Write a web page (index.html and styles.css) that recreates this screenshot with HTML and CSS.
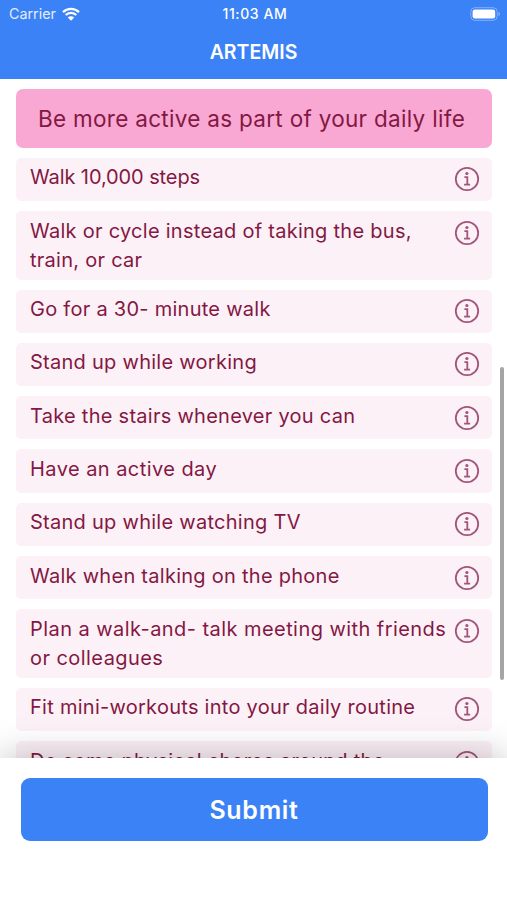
FILE: index.html
```html
<!DOCTYPE html>
<html lang="en">
<head>
<meta charset="UTF-8">
<meta name="viewport" content="width=device-width, initial-scale=1.0">
<title>Artemis</title>
<link rel="stylesheet" href="styles.css">
</head>
<body>
<svg class="hidden">
  <symbol id="info" viewBox="0 0 26 26">
    <circle cx="13" cy="13" r="11.2" fill="none" stroke="currentColor" stroke-width="1.8"/>
    <circle cx="12.9" cy="7.5" r="1.6" fill="currentColor"/>
    <path d="M10.4 11.2h2.9v7.4M10.1 18.6h6" fill="none" stroke="currentColor" stroke-width="1.8"/>
  </symbol>
</svg>
<div class="app">
  <header>
    <div class="status">
      <div class="carrier">
        <span>Carrier</span>
        <svg class="wifi" viewBox="0 0 18 14" width="18" height="14">
          <path d="M1 5.1a11.4 11.4 0 0 1 16 0M3.7 8a7.5 7.5 0 0 1 10.6 0" fill="none" stroke="#fff" stroke-width="2.2"/>
          <path d="M9 13.7 5.8 10.5a4.5 4.5 0 0 1 6.4 0z" fill="#fff"/>
        </svg>
      </div>
      <div class="time">11:03 AM</div>
      <svg class="battery" viewBox="0 0 31 14" width="31" height="14">
        <rect x=".8" y=".7" width="26.4" height="12.6" rx="4" fill="none" stroke="#85b1f9" stroke-width="1"/>
        <rect x="2.6" y="2.5" width="22.6" height="9" rx="2.3" fill="#fff"/>
        <path d="M28.5 5v4.2q1.6-.6 1.6-2.1T28.5 5z" fill="#85b1f9"/>
      </svg>
    </div>
    <h1>ARTEMIS</h1>
  </header>
  <main>
    <h2>Be more active as part of your daily life</h2>
    <ul class="goals">
      <li class="tight"><span>Walk 10,000 steps</span><svg class="icon"><use href="#info"/></svg></li>
      <li><span>Walk or cycle instead of taking the bus,<br>train, or car</span><svg class="icon"><use href="#info"/></svg></li>
      <li><span>Go for a 30- minute walk</span><svg class="icon"><use href="#info"/></svg></li>
      <li><span>Stand up while working</span><svg class="icon"><use href="#info"/></svg></li>
      <li><span>Take the stairs whenever you can</span><svg class="icon"><use href="#info"/></svg></li>
      <li class="wide"><span>Have an active day</span><svg class="icon"><use href="#info"/></svg></li>
      <li><span>Stand up while watching TV</span><svg class="icon"><use href="#info"/></svg></li>
      <li><span>Walk when talking on the phone</span><svg class="icon"><use href="#info"/></svg></li>
      <li class="wide"><span>Plan a walk-and- talk meeting with friends<br>or colleagues</span><svg class="icon"><use href="#info"/></svg></li>
      <li><span>Fit mini-workouts into your daily routine</span><svg class="icon"><use href="#info"/></svg></li>
      <li><span>Do some physical chores around the</span><svg class="icon"><use href="#info"/></svg></li>
    </ul>
    <div class="scrollbar"></div>
  </main>
  <footer>
    <button>Submit</button>
  </footer>
</div>
</body>
</html>
```

FILE: styles.css
```css
* {
  box-sizing: border-box;
}
body {
  margin: 0;
  font-family: Inter, "Open Sans", sans-serif;
  background-color: #fff;
  color: #831843;
}
.hidden {
  display: none;
}
.app {
  display: flex;
  flex-direction: column;
  height: 900px;
  overflow: hidden;
}
header {
  flex: none;
  height: 79px;
  background-color: #3b82f6;
  color: #fff;
}
.status {
  display: grid;
  grid-template-columns: 1fr auto 1fr;
  align-items: center;
  height: 27px;
  padding: 0 6px 0 9px;
  font-size: 14px;
}
.carrier {
  display: flex;
  align-items: center;
  gap: 6px;
  font-size: 14.3px;
  color: #e3edfe;
}
.time {
  font-weight: 500;
  letter-spacing: 0.6px;
}
.battery {
  justify-self: end;
}
h1 {
  margin: 0;
  padding-top: 10px;
  font-size: 19.5px;
  font-weight: 600;
  line-height: 30px;
  text-align: center;
}
main {
  position: relative;
  flex: none;
  height: 679px;
  padding: 10.4px 15px 0 16px;
  overflow: hidden;
}
h2 {
  margin: 0 0 10px;
  height: 58.5px;
  border-radius: 7px;
  background-color: #f9a8d4;
  font-size: 22.5px;
  font-weight: 400;
  letter-spacing: 0.3px;
  line-height: 60px;
  text-align: center;
  text-indent: -5px;
  white-space: nowrap;
}
.goals {
  display: flex;
  flex-direction: column;
  gap: 10px;
  margin: 0;
  padding: 0;
  list-style: none;
}
.goals li {
  display: flex;
  justify-content: space-between;
  min-height: 43.3px;
  padding: 5.6px 12px 4.2px 14px;
  border-radius: 5px;
  background-color: #fdf1f8;
  font-size: 20px;
  letter-spacing: 0.27px;
  line-height: 29.3px;
  white-space: nowrap;
}
.goals .tight {
  letter-spacing: -0.1px;
}
.goals .wide {
  letter-spacing: 0.44px;
}
.icon {
  flex: none;
  width: 26px;
  height: 26px;
  margin-top: 3px;
  color: #a2557a;
}
.scrollbar {
  position: absolute;
  top: 288px;
  right: 3px;
  width: 4px;
  height: 313px;
  border-radius: 2px;
  background-color: #a5a5a5;
}
footer {
  position: relative;
  flex: 1;
  padding: 20px 19.5px 0 20.5px;
  background-color: #fff;
  box-shadow: 0 0 36px rgba(0, 0, 0, 0.26);
}
button {
  display: block;
  width: 100%;
  height: 63px;
  padding: 0;
  border: none;
  border-radius: 9px;
  background-color: #3b82f6;
  color: #fff;
  font-family: inherit;
  font-size: 25px;
  font-weight: 600;
  letter-spacing: 0.7px;
}
```
